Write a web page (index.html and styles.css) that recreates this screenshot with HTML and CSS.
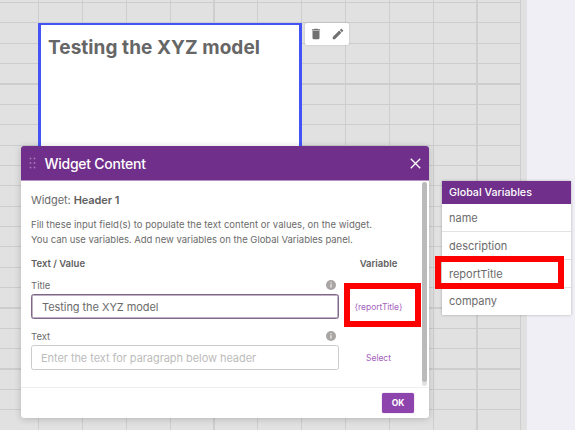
FILE: index.html
```html
<!DOCTYPE html>
<html lang="en">
<head>
<meta charset="utf-8">
<title>Report editor</title>
<link rel="stylesheet" href="styles.css">
</head>
<body>
<main class="workspace">
  <div class="canvas"><div class="rows"></div><div class="columns"></div></div>

  <section class="widget"><h1>Testing the XYZ model</h1></section>
  <div class="toolbar">
    <svg viewBox="0 0 24 24"><path d="M6 19c0 1.100.9 2 2 2h8c1.100 0 2-.9 2-2V7H6v12zM19 4h-3.500l-1-1h-5l-1 1H5v2h14V4z"/></svg>
    <svg viewBox="0 0 24 24"><path d="M3 17.250V21h3.750L17.810 9.940l-3.750-3.750L3 17.250zM20.710 7.040a1 1 0 0 0 0-1.410l-2.340-2.340a1 1 0 0 0-1.410 0l-1.830 1.830 3.750 3.750 1.830-1.830z"/></svg>
  </div>

  <section class="dialog">
    <header class="dialog-header">
      <svg class="grip" viewBox="0 0 8 12"><circle cx="1.500" cy="1.500" r=".95"/><circle cx="5.500" cy="1.500" r=".95"/><circle cx="1.500" cy="6" r=".95"/><circle cx="5.500" cy="6" r=".95"/><circle cx="1.500" cy="10.500" r=".95"/><circle cx="5.500" cy="10.500" r=".95"/></svg>
      <h2>Widget Content</h2>
      <svg class="close" viewBox="0 0 10 10"><path d="M.7.7l8.600 8.600M9.300.7L.7 9.300"/></svg>
    </header>
    <div class="dialog-body">
      <div class="form">
        <p class="widget-name">Widget: <b>Header 1</b></p>
        <p class="help"><span class="help-first">Fill these input field(s) to populate the text content or values, on the widget.</span><br><span class="help-second">You can use variables. Add new variables on the Global Variables panel.</span></p>
        <div class="row headings"><span>Text / Value</span><span class="variable">Variable</span></div>
        <div class="label"><span>Title</span><svg viewBox="0 0 10 10"><circle cx="5" cy="5" r="5"/><path d="M5 4.300v3.300M5 2.200v1.200"/></svg></div>
        <div class="row"><div class="input active">Testing the XYZ model</div><span class="variable link">{reportTitle}</span></div>
        <div class="label second"><span>Text</span><svg viewBox="0 0 10 10"><circle cx="5" cy="5" r="5"/><path d="M5 4.300v3.300M5 2.200v1.200"/></svg></div>
        <div class="row"><div class="input empty">Enter the text for paragraph below header</div><span class="variable link">Select</span></div>
      </div>
      <div class="scrollbar"><div class="thumb"></div></div>
    </div>
    <footer class="dialog-footer"><button>OK</button></footer>
  </section>

  <section class="globals">
    <h3>Global Variables</h3>
    <ul><li>name</li><li>description</li><li>reportTitle</li><li>company</li></ul>
  </section>
  <div class="highlight variable-highlight"></div>
  <div class="highlight global-highlight"></div>
</main>
</body>
</html>
```

FILE: styles.css
```css
* { box-sizing: border-box; }
body, h1, h2, h3, p, ul { margin: 0; padding: 0; }
body { font-family: Inter, "Liberation Sans", sans-serif; color: #6b6b6b; overflow: hidden; }
.workspace { position: relative; width: 575px; height: 430px; background: #f0eff5; overflow: hidden; }
.canvas { width: 527px; height: 430px; background: #e1e1e1; display: grid; }
.rows, .columns { grid-area: 1 / 1; }
.rows { width: 520px; margin-top: 2px; background: repeating-linear-gradient(to bottom, #cdcdcd 0 1.100px, transparent 1.100px 20.360px); }
.columns { margin-left: 37.500px; width: 483px; background: repeating-linear-gradient(to right, #cecece 0 1.200px, transparent 1.200px 43.850px); }

.widget { position: absolute; left: 38px; top: 23px; width: 264px; height: 180px; border: 3px solid #4353f8; border-top-width: 2px; background: #fff; padding: 11px 7px; }
.widget h1 { font-size: 19px; line-height: 24px; font-weight: 700; white-space: nowrap; letter-spacing: .06px; color: #666; }
.toolbar { position: absolute; left: 305px; top: 23px; width: 44px; height: 22px; background: #fff; border-radius: 2px; display: flex; align-items: center; justify-content: space-around; box-shadow: 0 0 2px #0003; }
.toolbar svg { width: 14px; height: 14px; fill: #717171; }

.dialog { position: absolute; left: 21px; top: 146px; width: 408px; height: 272px; border-radius: 3px; background: #fff; box-shadow: 0 1px 7px #0003; display: flex; flex-direction: column; overflow: hidden; }
.dialog-header { height: 35px; flex: none; background: #702f8a; border-bottom: 1px solid #b493c2; color: #fff; display: flex; align-items: center; padding: 0 8px; }
.grip { width: 8px; height: 12px; fill: #a477b6; }
.dialog-header h2 { flex: 1; font-size: 14px; font-weight: 500; margin-left: 7.500px; letter-spacing: -.26px; }
.close { width: 11px; height: 11px; stroke: #fff; stroke-width: 1.200; }
.dialog-body { height: 206px; flex: none; display: flex; justify-content: space-between; }
.form { width: 398px; padding: 11px 0 0 10px; }
.widget-name { font-size: 11px; line-height: 16px; letter-spacing: -.08px; }
.widget-name b { font-weight: 600; color: #606060; }
.help { font-size: 9.500px; line-height: 14.500px; margin-top: 10px; white-space: nowrap; }
.help-first { letter-spacing: .03px; }
.help-second { letter-spacing: -.02px; }
.row { display: flex; align-items: center; }
.variable { width: 79px; flex: none; text-align: center; font-size: 9.500px; }
.headings { justify-content: space-between; height: 14px; margin-top: 9px; font-size: 9.500px; font-weight: 600; width: 387px; color: #606060; }
.label { width: 305px; height: 12px; margin-top: 9px; display: flex; align-items: center; justify-content: space-between; font-size: 9.500px; }
.label svg { width: 10px; height: 10px; fill: #aaa5a5; stroke: #fff; stroke-width: 1; }
.label svg circle { stroke: none; }
.input { width: 308px; flex: none; height: 25px; border: 1px solid #ccc; border-radius: 2.500px; font-size: 11px; line-height: 24px; padding-left: 9px; white-space: nowrap; letter-spacing: -.06px; }
.label + .row { margin-top: 3px; }
.input.active { border-color: #806688; box-shadow: inset 0 0 0 .5px #806688; padding-left: 10px; }
.input.empty { color: #bcbcbc; }
.label.second { margin-top: 11px; }
.link { color: #a562be; font-size: 8.500px; letter-spacing: -.05px; }
.scrollbar { width: 5px; height: 204px; margin: 1px 2px 0 -7px; border-radius: 3px; background: #e1e1e1; }
.thumb { height: 200px; border-radius: 3px; background: #bababa; }
.dialog-footer { flex: 1; border-top: 1px solid #eee; display: flex; align-items: center; justify-content: flex-end; padding-right: 15px; }
.dialog-footer button { width: 32px; height: 20px; border: 0; border-radius: 2px; background: #8e44ad; color: #fff; font: 700 8.500px Inter, sans-serif; padding: 0; box-shadow: 0 0 1px #8e44ad; }

.globals { position: absolute; left: 442px; top: 181px; width: 129px; height: 134px; background: #fff; box-shadow: 0 0 3px #0004; border-radius: 1px; }
.globals h3 { height: 23px; background: #702f8a; color: #fff; font-size: 10.700px; line-height: 23px; font-weight: 500; padding-left: 7px; }
.globals ul { list-style: none; }
.globals li { height: 28px; line-height: 28px; font-size: 11px; padding-left: 7px; border-bottom: 1px solid #e3e3e3; }
.globals li:last-child { border: 0; height: 27px; line-height: 27px; }
.highlight { position: absolute; border: 6px solid #f00; }
.variable-highlight { left: 344px; top: 283px; width: 77px; height: 44px; }
.global-highlight { left: 435px; top: 256px; width: 129px; height: 33px; }
```
